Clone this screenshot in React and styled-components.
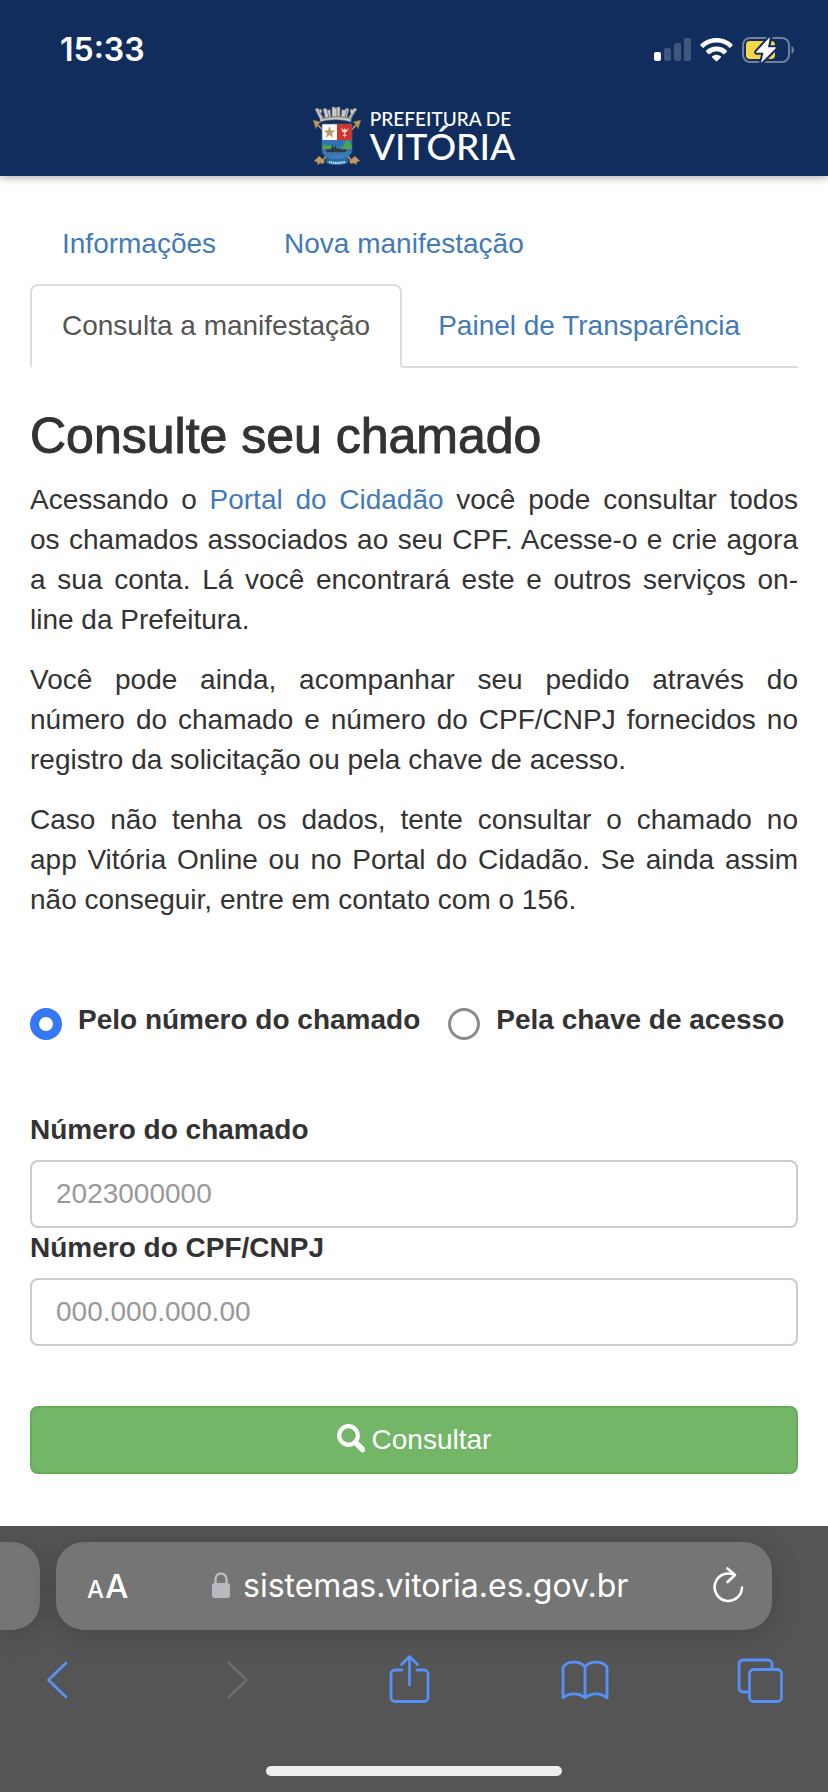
import React, { useState } from "react";
import styled, { createGlobalStyle } from "styled-components";

const GlobalStyle = createGlobalStyle`
  *, *::before, *::after { box-sizing: border-box; }
  body {
    margin: 0;
    background: #fff;
    color: #333;
    font-family: "Liberation Sans", Arial, sans-serif;
    font-size: 28px;
    line-height: 40px;
  }
`;

const Page = styled.div`
  display: flex;
  flex-direction: column;
  min-height: 100vh;
`;

const Header = styled.header`
  background: #102d5d;
  color: #fff;
  box-shadow: 0 2px 8px rgba(0, 0, 0, 0.3);
`;

const StatusBar = styled.div`
  display: flex;
  align-items: center;
  justify-content: space-between;
  height: 100px;
  padding: 0 34px 0 60px;
`;

const Clock = styled.time`
  font: 600 32px/40px Inter, sans-serif;
`;

const StatusIcons = styled.div`
  display: flex;
  align-items: center;
  gap: 9px;
`;

const Brand = styled.a`
  display: flex;
  justify-content: center;
  gap: 9px;
  height: 76px;
  padding-top: 6px;
  color: #fff;
  text-decoration: none;
`;

const BrandName = styled.span`
  display: flex;
  flex-direction: column;
  padding-top: 3px;
  font-family: Lato, sans-serif;
  font-weight: 500;
`;

const BrandTop = styled.span`
  font-size: 19px;
  line-height: 20px;
`;

const BrandMain = styled.span`
  font-size: 37px;
  line-height: 34px;
`;

const Main = styled.main`
  flex: 1;
  padding: 26px 30px 52px;
`;

const Tabs = styled.nav`
  display: flex;
  flex-wrap: wrap;
  border-bottom: 2px solid #ddd;
`;

const Tab = styled.a`
  margin: 0 4px -2px 0;
  padding: 20px 30px;
  border: 2px solid transparent;
  border-radius: 8px 8px 0 0;
  color: ${(p) => (p.$active ? "#555" : "#437ab7")};
  text-decoration: none;
  ${(p) => p.$active && "background: #fff; border-color: #ddd #ddd #fff;"}
`;

const Title = styled.h1`
  margin: 42px 0 18px;
  font-size: 50px;
  line-height: 52px;
  font-weight: 400;
  -webkit-text-stroke: 1px #333;
`;

const Paragraph = styled.p`
  margin: 0 0 20px;
  text-align: justify;
`;

const TextLink = styled.a`
  color: #437ab7;
  text-decoration: none;
`;

const Choices = styled.fieldset`
  display: flex;
  flex-wrap: wrap;
  gap: 28px;
  margin: 80px 0 70px;
  padding: 0;
  border: 0;
`;

const Choice = styled.label`
  display: flex;
  align-items: flex-start;
  gap: 16px;
  font-weight: 700;
`;

const Radio = styled.input`
  appearance: none;
  width: 32px;
  height: 32px;
  margin: 8px 0 0;
  border: 3px solid #8a8a8a;
  border-radius: 50%;
  background: #fff;
  &:checked { border: 9px solid #3478f6; }
`;

const Label = styled.label`
  display: block;
  margin-bottom: 10px;
  font-weight: 700;
`;

const TextInput = styled.input`
  display: block;
  width: 100%;
  height: 68px;
  padding: 0 24px;
  border: 2px solid #ccc;
  border-radius: 8px;
  background: #fff;
  color: #555;
  font: inherit;
  &::placeholder { color: #999; opacity: 1; }
`;

const Submit = styled.button`
  display: flex;
  align-items: center;
  justify-content: center;
  gap: 7px;
  width: 100%;
  height: 68px;
  margin-top: 60px;
  padding: 0;
  border: 2px solid #66ac59;
  border-radius: 8px;
  background: #74b667;
  color: #fff;
  font: inherit;
`;

const BrowserBar = styled.footer`
  display: flex;
  flex-direction: column;
  padding-top: 16px;
  background: #555;
  overflow: hidden;
`;

const AddressRow = styled.div`
  display: flex;
  gap: 16px;
  padding-right: 56px;
`;

const Pill = styled.div`
  height: 88px;
  background: #757575;
  box-shadow: 0 4px 28px rgba(0, 0, 0, 0.2);
`;

const PreviousTab = styled(Pill)`
  width: 40px;
  border-radius: 0 28px 28px 0;
`;

const Address = styled(Pill)`
  display: flex;
  flex: 1;
  align-items: center;
  justify-content: space-between;
  padding: 0 28px 0 31px;
  border-radius: 28px;
  color: #fff;
  font-family: Inter, sans-serif;
`;

const IconButton = styled.button`
  display: flex;
  align-items: center;
  justify-content: center;
  padding: 0;
  border: 0;
  background: none;
  color: ${(p) => (p.$tone === "plain" ? "#fff" : "#5790f8")};
  &:disabled { color: #6b6b6b; }
`;

const TextSizeButton = styled(IconButton)`
  align-items: baseline;
  gap: 1px;
  padding-top: 4px;
  font: 500 33px/40px Inter, sans-serif;
`;

const SmallLetter = styled.span`
  font-size: 24px;
`;

const Url = styled.span`
  display: flex;
  align-items: center;
  gap: 13px;
  font-size: 32px;
`;

const Toolbar = styled.div`
  display: flex;
  justify-content: space-between;
  padding: 24px 44px 0 34px;
`;

const HomeIndicator = styled.div`
  align-self: center;
  width: 296px;
  height: 10px;
  margin: 60px 0 16px;
  border-radius: 5px;
  background: #eee;
`;

const Signal = () => (
  <svg width="37" height="24" viewBox="0 0 37 24" aria-hidden="true">
    <rect x="0" y="14" width="7" height="9" rx="2" fill="#fff" />
    <g fill="#40577d">
      <rect x="10" y="10" width="7" height="13" rx="2" />
      <rect x="20" y="5" width="7" height="18" rx="2" />
      <rect x="30" y="0" width="7" height="23" rx="2" />
    </g>
  </svg>
);

const Wifi = () => (
  <svg width="33" height="24" viewBox="0 0 33 24" aria-hidden="true">
    <path d="M16.5 0C10 0 4.300 2.500.5 6.400c-.4.400-.4.800 0 1.200l2 2c.4.400.9.400 1.300 0C7.100 6.300 11.600 4.600 16.500 4.600s9.400 1.700 12.700 5c.4.400.9.400 1.300 0l2-2c.4-.4.400-.8 0-1.200C28.700 2.500 23 0 16.500 0Z" fill="#fff" />
    <path d="M16.500 8.600c-4 0-7.700 1.500-10.300 3.900-.4.400-.4.900 0 1.300l2.200 2.100c.4.400.9.400 1.300 0a10 10 0 0 1 13.600 0c.4.400.9.400 1.300 0l2.200-2.100c.4-.4.400-.9 0-1.300a15 15 0 0 0-10.300-3.900Z" fill="#fff" />
    <path d="M16.500 16.700c-1.700 0-3.200.6-4.300 1.500-.4.400-.4.800 0 1.200l3.600 3.700c.4.400 1 .4 1.400 0l3.600-3.700c.4-.4.400-.8 0-1.200a7 7 0 0 0-4.300-1.500Z" fill="#fff" />
  </svg>
);

const Battery = () => (
  <svg width="52" height="28" viewBox="0 0 52 28" aria-hidden="true">
    <rect x="1" y="2" width="46" height="24" rx="7" fill="none" stroke="#70819e" strokeWidth="2" />
    <path d="M49.500 10v8c1.600-.7 2.500-2 2.500-4s-.9-3.300-2.500-4Z" fill="#70819e" />
    <rect x="4" y="5" width="29" height="18" rx="4" fill="#f7d64a" />
    <path d="M28 1 14.500 15.500c-.6.700-.3 1.300.5 1.300h6.500L19 27.500l14.500-15c.6-.7.300-1.300-.5-1.300h-7L28.500 1Z" fill="#fff" stroke="#102d5d" strokeWidth="4" strokeLinejoin="round" />
    <path d="M28 1 14.500 15.500c-.6.700-.3 1.300.5 1.300h6.500L19 27l14.500-14.500c.6-.7.300-1.300-.5-1.300h-7Z" fill="#fff" />
  </svg>
);

const Crest = () => (
  <svg width="48" height="60" viewBox="0 0 48 60" aria-hidden="true">
    <g stroke="#bd9a60" strokeWidth="1.800">
      <path d="M3 17 39 55M45 17 9 55" />
    </g>
    <g fill="#bd9a60" stroke="#715c3c" strokeWidth=".5">
      <path d="m0 14 8 2-2.500 2L3 23ZM48 14l-8 2 2.500 2 2.500 5Z" />
      <path d="m6 50 6 5-2 3-3-1-2 2-1-3-3-1 2-2ZM42 50l-6 5 2 3 3-1 2 2 1-3 3-1-2-2Z" />
    </g>
    <path d="M2 3 5 2l1 2 2-1 1 2-1 3 3 4 1-1-2-8 3-1 1 2h2l1-1 1 8h1V1h3l1 2 1-2h3v10h1l1-8 1 1h2l1-2 3 1-2 8 1 1 3-4-1-3 1-2 2 1 1-2 3 1-6 10v3c-9-3-22-3-31 0v-3Z" fill="#c9c9c8" stroke="#666b74" strokeWidth=".6" />
    <path d="m6 5 4 7M14 4l2 7M24 3v8M34 4l-2 7M42 5l-4 7M9 13c9-3 21-3 30 0" fill="none" stroke="#777" strokeWidth="1" />
    <path d="M9 18h15v16H9Z" fill="#fff" />
    <path d="M24 18h15v16H24Z" fill="#cf3529" />
    <path d="m16.500 20 1.500 4.500h4.500l-3.600 2.800 1.400 4.400-3.800-2.700-3.800 2.700 1.400-4.400-3.600-2.800H15Z" fill="#b99861" />
    <path d="m28 22 3 2 .7-2 1 2 3-2-2 4-1.500.5v2l2 1-2 .5-.5 2-.5-2-2-.5 2-1v-2l-1.700-.5Z" fill="#f2d8d0" />
    <path d="M9 34h30v10c0 5-7 10-15 10S9 49 9 44Z" fill="#3273b5" />
    <path d="M9 43v-3l3-2 3 2 3-1 3 4ZM27 43l3-3 4-6 2 1 3 5v3Z" fill="#4aa549" />
    <path d="M13 43.500h5v-2h1v-3h1v3h2v-2h1v3h4v1h7l-2 3H14Z" fill="#303743" />
    <path d="M9 47h30M11 50h26M16 52h17" stroke="#5b94cb" strokeWidth=".8" strokeDasharray="2 1" />
    <path d="M9 18v26c0 5 7 10 15 10s15-5 15-10V18Z" fill="none" stroke="#47618a" strokeWidth=".7" />
    <path d="M13 52c7 2 15 2 22 0v5c-7 3-15 3-22 0Z" fill="#246cae" />
    <path d="M16 56c5 1.200 11 1.200 16 0" fill="none" stroke="#e3edf6" strokeWidth="2" strokeDasharray="1.300 .6" />
  </svg>
);

const SearchIcon = () => (
  <svg width="28" height="32" viewBox="0 0 28 32" fill="none" stroke="#fff" aria-hidden="true">
    <circle cx="11.500" cy="11.500" r="9.300" strokeWidth="4.200" />
    <path d="m18.500 18.500 7 7" strokeWidth="5.500" strokeLinecap="round" />
  </svg>
);

const Lock = () => (
  <svg width="18" height="28" viewBox="0 0 18 28" aria-hidden="true">
    <rect y="11" width="18" height="15" rx="3" fill="#bab9c2" />
    <path d="M3.500 12V7a5.500 5.500 0 0 1 11 0v5" fill="none" stroke="#bab9c2" strokeWidth="2.400" />
  </svg>
);

const Reload = () => (
  <svg width="32" height="40" viewBox="0 0 32 40" fill="none" stroke="currentColor" strokeWidth="2.600" strokeLinecap="round" strokeLinejoin="round" aria-hidden="true">
    <path d="M30 21.500A13.700 13.700 0 1 1 22.500 9" />
    <path d="m15.500 2.500 7.500 6.500-7.500 7" />
  </svg>
);

const ToolIcon = ({ children }) => (
  <svg width="48" height="52" viewBox="0 0 48 52" fill="none" stroke="currentColor" strokeWidth="2.800" strokeLinecap="round" strokeLinejoin="round" aria-hidden="true">
    {children}
  </svg>
);

const TABS = ["Informações", "Nova manifestação", "Consulta a manifestação", "Painel de Transparência"];

const CHOICES = [
  ["numero", "Pelo número do chamado"],
  ["chave", "Pela chave de acesso"],
];

export default function App() {
  const [mode, setMode] = useState("numero");

  return (
    <Page>
      <GlobalStyle />
      <Header>
        <StatusBar>
          <Clock>15:33</Clock>
          <StatusIcons>
            <Signal />
            <Wifi />
            <Battery />
          </StatusIcons>
        </StatusBar>
        <Brand href="#inicio">
          <Crest />
          <BrandName>
            <BrandTop>PREFEITURA DE</BrandTop>
            <BrandMain>VITÓRIA</BrandMain>
          </BrandName>
        </Brand>
      </Header>

      <Main>
        <Tabs>
          {TABS.map((name, i) => (
            <Tab key={name} href={`#aba-${i}`} $active={i === 2}>
              {name}
            </Tab>
          ))}
        </Tabs>

        <Title>Consulte seu chamado</Title>
        <Paragraph>
          Acessando o <TextLink href="#portal">Portal do Cidadão</TextLink> você pode consultar todos
          os&nbsp;chamados associados ao seu CPF. Acesse-o e crie agora a&nbsp;sua conta. Lá você
          encontrará este e outros serviços on-line&nbsp;da Prefeitura.
        </Paragraph>
        <Paragraph>
          Você pode ainda, acompanhar seu pedido através do número&nbsp;do&nbsp;chamado e número do
          CPF/CNPJ fornecidos no registro&nbsp;da solicitação ou pela chave de acesso.
        </Paragraph>
        <Paragraph>
          Caso não tenha os dados, tente consultar o chamado no app&nbsp;Vitória Online ou no Portal do
          Cidadão. Se ainda assim não&nbsp;conseguir, entre em contato com o 156.
        </Paragraph>

        <form onSubmit={(e) => e.preventDefault()}>
          <Choices>
            {CHOICES.map(([value, text]) => (
              <Choice key={value}>
                <Radio type="radio" name="modo" checked={mode === value} onChange={() => setMode(value)} />
                {text}
              </Choice>
            ))}
          </Choices>
          <Label htmlFor="chamado">Número do chamado</Label>
          <TextInput id="chamado" placeholder="2023000000" />
          <Label htmlFor="cpf">Número do CPF/CNPJ</Label>
          <TextInput id="cpf" placeholder="000.000.000.00" />
          <Submit type="submit">
            <SearchIcon />
            Consultar
          </Submit>
        </form>
      </Main>

      <BrowserBar>
        <AddressRow>
          <PreviousTab />
          <Address>
            <TextSizeButton type="button" $tone="plain">
              <SmallLetter>A</SmallLetter>A
            </TextSizeButton>
            <Url>
              <Lock />
              sistemas.vitoria.es.gov.br
            </Url>
            <IconButton type="button" $tone="plain" aria-label="Recarregar">
              <Reload />
            </IconButton>
          </Address>
        </AddressRow>
        <Toolbar>
          <IconButton type="button" aria-label="Voltar">
            <ToolIcon><path d="M32 9 14.500 26 32 43" /></ToolIcon>
          </IconButton>
          <IconButton type="button" aria-label="Avançar" disabled>
            <ToolIcon><path d="M19 9l17.500 17L19 43" /></ToolIcon>
          </IconButton>
          <IconButton type="button" aria-label="Compartilhar">
            <ToolIcon>
              <path d="M17 16h-7a4 4 0 0 0-4 4v23.500a4 4 0 0 0 4 4h29a4 4 0 0 0 4-4V20a4 4 0 0 0-4-4h-7" />
              <path d="M24.500 31V3M16.500 10.500l8-8 8 8" />
            </ToolIcon>
          </IconButton>
          <IconButton type="button" aria-label="Favoritos">
            <ToolIcon>
              <path d="M24 13C19 6.500 7 6.500 2 13v31c6-5.500 16-5.500 22 0 6-5.500 16-5.500 22 0V13C41 6.500 29 6.500 24 13ZM24 13v31" />
            </ToolIcon>
          </IconButton>
          <IconButton type="button" aria-label="Abas">
            <ToolIcon>
              <path d="M13 38H7a4 4 0 0 1-4-4V10a4 4 0 0 1 4-4h25a4 4 0 0 1 4 4v5" />
              <rect x="13.500" y="15.500" width="32" height="32" rx="4" />
            </ToolIcon>
          </IconButton>
        </Toolbar>
        <HomeIndicator />
      </BrowserBar>
    </Page>
  );
}
